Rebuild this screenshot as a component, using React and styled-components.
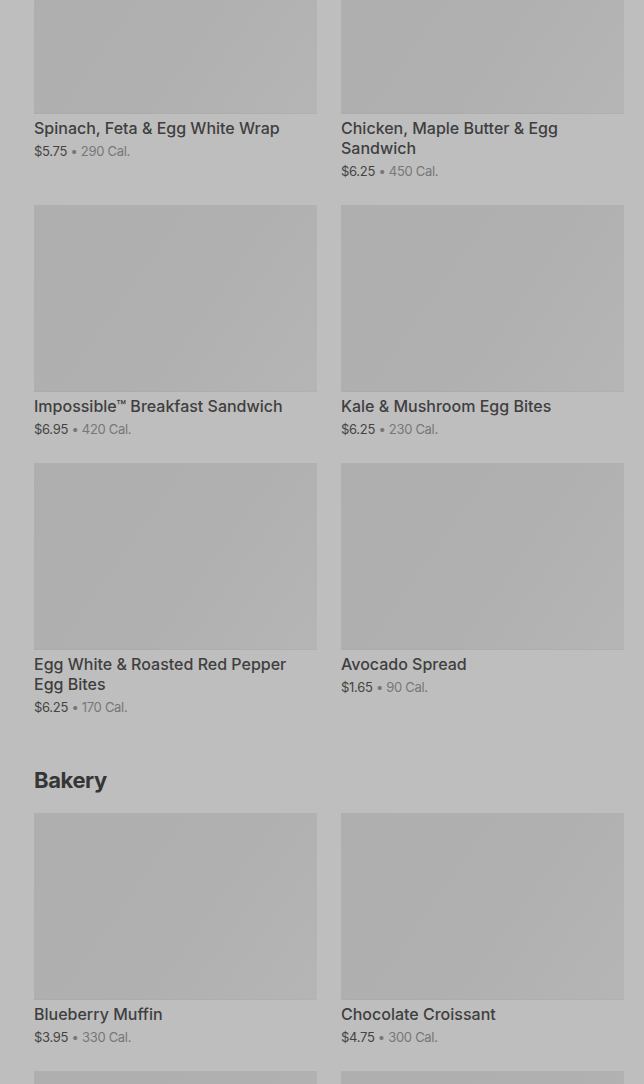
import React from 'react'
import styled, { createGlobalStyle } from 'styled-components'

const GlobalStyle = createGlobalStyle`
  html, body {
    margin: 0;
    padding: 0;
    background: #bebebe;
    overflow: hidden;
  }
  body {
    font-family: Inter, Roboto, "Liberation Sans", sans-serif;
    -webkit-font-smoothing: antialiased;
  }
`

const Page = styled.div`
  width: 644px;
  height: 1084px;
  overflow: hidden;
  background: #bebebe;
`

const Content = styled.div`
  margin-top: -73px;
  padding: 0 20px 0 34px;
`

const Section = styled.section`
  & + & {
    margin-top: 49px;
  }
`

const SectionTitle = styled.h2`
  margin: 0 0 19px;
  font-size: 22px;
  line-height: 28px;
  font-weight: 700;
  letter-spacing: -0.4px;
  color: #363636;
`

const Grid = styled.div`
  display: grid;
  grid-template-columns: 283px 283px;
  column-gap: 24px;
  row-gap: 24px;
`

const Card = styled.div`
  display: flex;
  flex-direction: column;
`

const Thumb = styled.div`
  height: 187px;
  background: linear-gradient(125deg, #afafaf 0%, #b0b0b0 55%, #b5b5b5 100%);
  box-shadow: inset 0 -1px 0 rgba(0, 0, 0, 0.02);
`

const Name = styled.div`
  margin-top: 4px;
  font-size: 16px;
  line-height: 20px;
  font-weight: 500;
  color: #3f3f3f;
`

const Meta = styled.div`
  margin-top: 3px;
  font-size: 13px;
  line-height: 20px;
  letter-spacing: -0.3px;
  color: #444;
`

const Cal = styled.span`
  color: #777;
`

const breakfast = [
  { name: 'Spinach, Feta & Egg White Wrap', price: '$5.75', cal: 290 },
  { name: 'Chicken, Maple Butter & Egg Sandwich', price: '$6.25', cal: 450 },
  { name: 'Impossible™ Breakfast Sandwich', price: '$6.95', cal: 420 },
  { name: 'Kale & Mushroom Egg Bites', price: '$6.25', cal: 230 },
  { name: 'Egg White & Roasted Red Pepper Egg Bites', price: '$6.25', cal: 170 },
  { name: 'Avocado Spread', price: '$1.65', cal: 90 },
]

const bakery = [
  { name: 'Blueberry Muffin', price: '$3.95', cal: 330 },
  { name: 'Chocolate Croissant', price: '$4.75', cal: 300 },
  { name: '', price: '', cal: null },
  { name: '', price: '', cal: null },
]

const Item = ({ item }) => (
  <Card>
    <Thumb />
    {item.name && <Name>{item.name}</Name>}
    {item.price && (
      <Meta>
        {item.price} <Cal>• {item.cal} Cal.</Cal>
      </Meta>
    )}
  </Card>
)

const App = () => {
  return (
    <Page>
      <GlobalStyle />
      <Content>
        <Section>
          <Grid>
            {breakfast.map((it, i) => <Item key={i} item={it} />)}
          </Grid>
        </Section>
        <Section>
          <SectionTitle>Bakery</SectionTitle>
          <Grid>
            {bakery.map((it, i) => <Item key={i} item={it} />)}
          </Grid>
        </Section>
      </Content>
    </Page>
  )
}

export default App
